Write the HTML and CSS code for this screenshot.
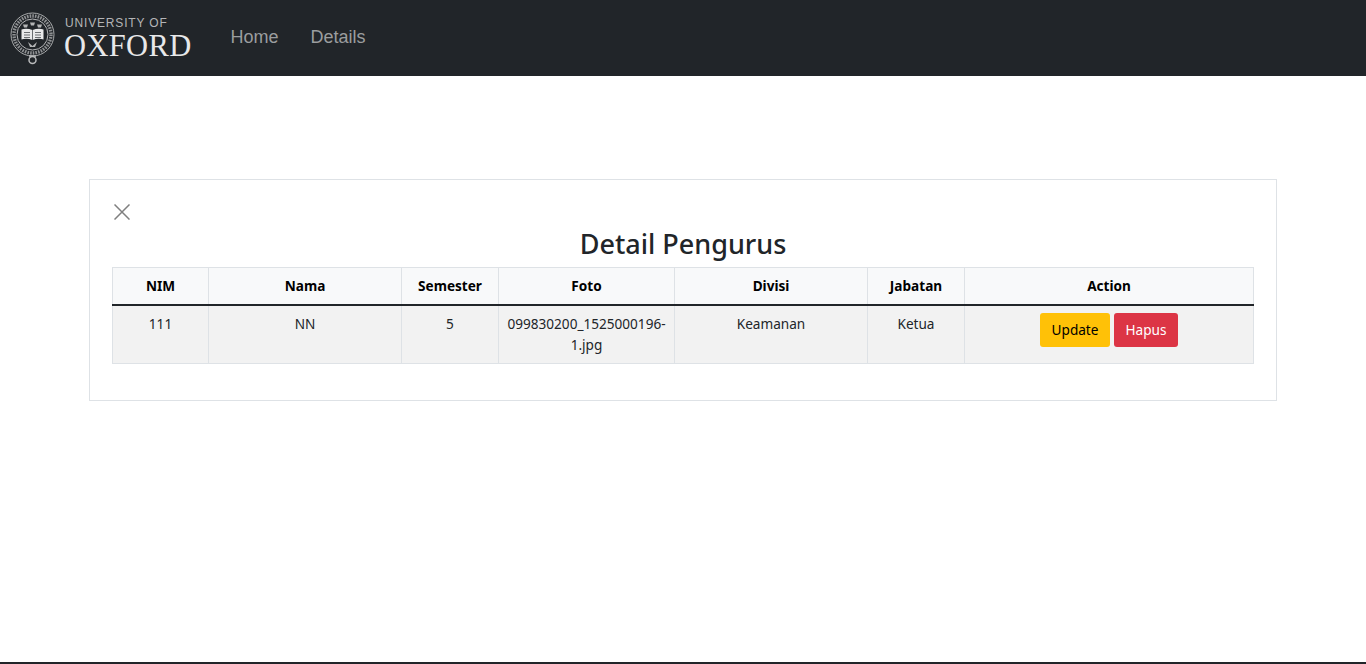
FILE: index.html
```html
<!DOCTYPE html>
<html lang="en">
<head>
  <meta charset="UTF-8" />
  <meta name="viewport" content="width=device-width, initial-scale=1.0"/>
  <title>Detail Pengurus</title>
  <link rel="stylesheet" href="styles.css">
</head>
<body>
  <nav class="navbar">
    <a class="brand" href="#">
      <svg class="crest" width="46" height="54" viewBox="0 0 46 54" fill="none">
        <circle cx="22.5" cy="22.5" r="21.5" stroke="#a9abac" stroke-width="1"/>
        <circle cx="22.5" cy="22.5" r="18.500" stroke="#8f9193" stroke-width="3.400" stroke-dasharray="1.600 1.100"/>
        <circle cx="22.5" cy="22.5" r="15.500" stroke="#b5b6b8" stroke-width="1"/>
        <path d="M13 12.500h5l-1 3h-3zM20 10.500h5l-1 3h-3zM27 12.500h5l-1 3h-3z" fill="#b4b5b6"/>
        <path d="M11.500 17.500c3-1 7-1 11 .5 4-1.500 8-1.500 11-.5v10c-3-1-7-1-11 .5-4-1.500-8-1.500-11-.5z" fill="#e9e9ea"/>
        <path d="M22.500 18v10M14 20.500h6M14 23h6M14 25.500h6M25 20.500h6M25 23h6M25 25.500h6" stroke="#6a6d70" stroke-width="1"/>
        <path d="M18 30l4.500 4 4.500-4-2 5h-5z" fill="#b4b5b6"/>
        <circle cx="22.500" cy="48" r="3.500" stroke="#b9babb" stroke-width="1.500"/>
        <path d="M19 44h7" stroke="#b9babb" stroke-width="1.500"/>
      </svg>
      <span class="brand-text">
        <span class="brand-top">UNIVERSITY OF</span>
        <span class="brand-name">OXFORD</span>
      </span>
    </a>
    <ul class="nav-links">
      <li><a href="#">Home</a></li>
      <li><a href="#">Details</a></li>
    </ul>
  </nav>

  <main class="content">
    <div class="card">
      <button class="btn-close" aria-label="Close">
        <svg width="16" height="16" viewBox="0 0 16 16"><path d="M.5.500l15 15M15.500.500l-15 15" stroke="#7f7f7f" stroke-width="1.500"/></svg>
      </button>
      <h3 class="title">Detail Pengurus</h3>
      <table class="table">
        <colgroup>
          <col class="c-nim"><col class="c-nama"><col class="c-sem"><col class="c-foto">
          <col class="c-divisi"><col class="c-jabatan"><col class="c-action">
        </colgroup>
        <thead>
          <tr>
            <th>NIM</th>
            <th>Nama</th>
            <th>Semester</th>
            <th>Foto</th>
            <th>Divisi</th>
            <th>Jabatan</th>
            <th>Action</th>
          </tr>
        </thead>
        <tbody>
          <tr>
            <td>111</td>
            <td>NN</td>
            <td>5</td>
            <td>099830200_1525000196-1.jpg</td>
            <td>Keamanan</td>
            <td>Ketua</td>
            <td class="actions">
              <a class="btn btn-warning" href="#">Update</a>
              <a class="btn btn-danger" href="#">Hapus</a>
            </td>
          </tr>
        </tbody>
      </table>
    </div>
  </main>

  <footer class="footer"></footer>
</body>
</html>
```

FILE: styles.css
```css
* {
  box-sizing: border-box;
}

body {
  margin: 0;
  min-height: 100vh;
  display: flex;
  flex-direction: column;
  background: #fff;
  color: #212529;
  font-family: 'Noto Sans', 'Open Sans', sans-serif;
  font-size: 13.6px;
  overflow: hidden;
}

.navbar {
  height: 76px;
  background: #212529;
  display: flex;
  align-items: center;
  padding-left: 10px;
}

.brand {
  display: flex;
  align-items: flex-start;
  gap: 8px;
  text-decoration: none;
  height: 54px;
  margin-top: 2px;
}

.brand-text {
  display: flex;
  flex-direction: column;
  color: #e8e8e9;
}

.brand-top {
  font-family: 'Liberation Sans', sans-serif;
  font-size: 12px;
  line-height: 14px;
  letter-spacing: .83px;
  margin-top: 4px;
  margin-left: 1px;
  color: #b4b5b7;
}

.brand-name {
  font-family: 'Liberation Serif', serif;
  font-size: 30.500px;
  line-height: 28px;
  letter-spacing: .35px;
  margin-top: 2px;
}

.nav-links {
  list-style: none;
  display: flex;
  gap: 32px;
  margin: 0 0 2px 39px;
  padding: 0;
}

.nav-links a {
  font-family: 'Liberation Sans', sans-serif;
  font-size: 18px;
  color: #9b9d9f;
  text-decoration: none;
}

.content {
  flex: 1;
  padding: 103px 89px 0;
}

.card {
  height: 222px;
  border: 1px solid #dee2e6;
  padding: 24px 22px;
}

.btn-close {
  display: block;
  border: none;
  background: none;
  padding: 0;
  margin-left: 2px;
  width: 16px;
  height: 16px;
}

.btn-close svg {
  display: block;
}

.title {
  margin: 7px 0 6px;
  text-align: center;
  font-size: 27px;
  font-weight: 500;
  line-height: 34px;
}

.table {
  width: 1141px;
  table-layout: fixed;
  border-collapse: collapse;
  text-align: center;
}

.c-nim { width: 96px; }
.c-nama { width: 193px; }
.c-sem { width: 97px; }
.c-foto { width: 176px; }
.c-divisi { width: 193px; }
.c-jabatan { width: 97px; }
.c-action { width: 289px; }

.table th,
.table td {
  border: 1px solid #dee2e6;
  padding: 8px;
  vertical-align: top;
}

.table th {
  height: 37px;
  background: #f8f9fa;
  color: #000;
  font-weight: 700;
  line-height: 20px;
  border-bottom: 2px solid #212529;
}

.table td {
  height: 58px;
  padding-top: 7px;
  background: #f2f2f2;
  line-height: 21px;
}

.actions {
  font-size: 0;
}

.btn {
  display: inline-block;
  height: 34px;
  padding: 0 11.5px;
  border-radius: 3px;
  font-size: 13.6px;
  line-height: 34px;
  text-decoration: none;
}

.btn-warning {
  background: #ffc107;
  color: #000;
  margin-right: 4px;
}

.btn-danger {
  background: #dc3545;
  color: #fff;
}

.footer {
  height: 2px;
  background: #212529;
}
```
